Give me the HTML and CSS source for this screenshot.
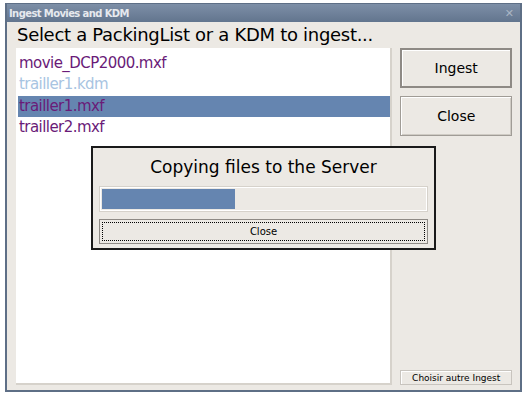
FILE: index.html
```html
<!DOCTYPE html>
<html>
<head>
<meta charset="utf-8">
<link rel="stylesheet" href="styles.css">
</head>
<body>
<div class="window">
  <div class="titlebar">
    <span class="title">Ingest Movies and KDM</span>
    <span class="x">✕</span>
  </div>
  <div class="content">
    <div class="heading">Select a PackingList or a KDM to ingest...</div>
    <div class="main">
      <div class="list">
        <div class="item">movie_DCP2000.mxf</div>
        <div class="item kdm">trailler1.kdm</div>
        <div class="item sel">trailler1.mxf</div>
        <div class="item">trailler2.mxf</div>
      </div>
      <div class="side">
        <button class="btn big">Ingest</button>
        <button class="btn big">Close</button>
        <div class="spacer"></div>
        <button class="btn small">Choisir autre Ingest</button>
      </div>
    </div>
  </div>
  <div class="dialog">
    <div class="dtitle">Copying files to the Server</div>
    <div class="progress"><div class="fill" style="width:133px"></div></div>
    <button class="dbtn"><span class="focus">Close</span></button>
  </div>
</div>
</body>
</html>
```
FILE: styles.css
```css
html, body { margin: 0; padding: 0; background: #ffffff; }
body { font-family: "DejaVu Sans", Verdana, sans-serif; }

.window {
  position: relative;
  margin: 3px 0 0 5px;
  width: 513px;
  height: 386px;
  border: 2px solid #5e6f86;
  border-top-width: 1px;
  background: #ece9e4;
  display: flex;
  flex-direction: column;
}

.titlebar {
  height: 18px;
  background: linear-gradient(#7d8fa7, #62758e);
  display: flex;
  align-items: center;
  justify-content: space-between;
  padding: 0 6px 0 2px;
}
.title {
  color: #e6e9ee;
  font-size: 10px;
  font-weight: bold;
  letter-spacing: -0.6px;
}
.x {
  color: #a9b5c4;
  font-size: 11px;
  font-weight: bold;
}

.content {
  flex: 1;
  display: flex;
  flex-direction: column;
  padding: 0 8px 5px 9px;
}
.heading {
  font-size: 18px;
  letter-spacing: -0.3px;
  color: #000;
  height: 26px;
  line-height: 25px;
  padding-left: 1px;
}
.main {
  flex: 1;
  display: flex;
  gap: 8px;
}
.list {
  width: 374px;
  background: #ffffff;
  border: 2px solid #d6d2cb;
  border-top: none;
  border-left: none;
  padding: 5px 0 0 2px;
}
.item {
  font-size: 15px;
  letter-spacing: -0.55px;
  height: 21.4px;
  line-height: 21px;
  color: #6a1b78;
  padding-left: 1px;
}
.item.kdm { color: #a8c4e2; }
.item.sel { background: #6585b0; }

.side {
  width: 112px;
  display: flex;
  flex-direction: column;
  gap: 8px;
}
.btn {
  font-family: "DejaVu Sans", Verdana, sans-serif;
  background: #ece9e4;
  color: #000;
  padding: 0;
  margin: 0;
}
.btn.big {
  height: 40px;
  font-size: 14px;
  border: 1px solid #a09c96;
  box-shadow: inset 1px 1px 0 #fff, inset -1px -1px 0 #cfcbc4;
}
.btn.big:first-child {
  border: 2px solid #8e8a85;
  box-shadow: inset 1px 1px 0 #fff;
}
.spacer { flex: 1; }
.btn.small {
  height: 15px;
  font-size: 9px;
  border: 1px solid #c8c4be;
  box-shadow: inset 1px 1px 0 #fff;
  margin-bottom: 0;
}

.dialog {
  position: absolute;
  left: 84px;
  top: 142px;
  width: 329px;
  height: 100px;
  border: 2px solid #1a1a1a;
  background: #ece9e4;
  display: flex;
  flex-direction: column;
  padding: 0 6px;
}
.dtitle {
  font-size: 17px;
  text-align: center;
  height: 38px;
  line-height: 38px;
}
.progress {
  height: 20px;
  border: 1px solid #d6d2cb;
  background: #ece9e4;
  padding: 2px;
  box-shadow: inset 0 0 0 1px #fff;
}
.fill {
  height: 100%;
  background: #6585b0;
}
.dbtn {
  margin-top: 7px;
  height: 25px;
  border: 1px solid #8e8a85;
  background: #ece9e4;
  padding: 2px;
  font-family: "DejaVu Sans", Verdana, sans-serif;
  font-size: 10px;
  display: flex;
}
.focus {
  flex: 1;
  border: 1px dotted #000;
  display: flex;
  align-items: center;
  justify-content: center;
}
```
